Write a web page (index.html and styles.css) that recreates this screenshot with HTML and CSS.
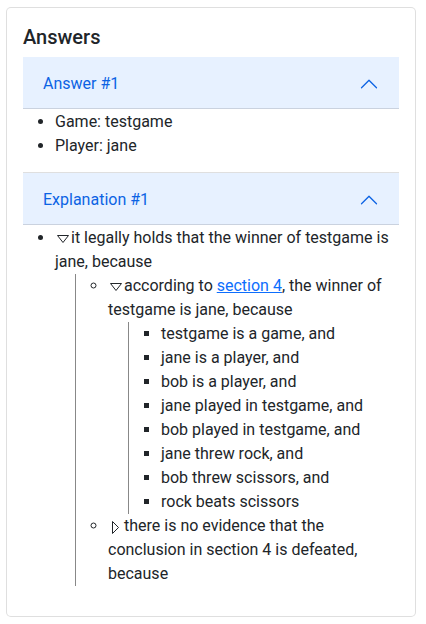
FILE: index.html
```html
<!DOCTYPE html>
<html lang="en">
<head>
<meta charset="utf-8">
<title>Answers</title>
<link rel="stylesheet" href="styles.css">
</head>
<body>
<div class="card">
  <div class="card-body">
    <h5 class="card-title">Answers</h5>
    <div class="accordion">
      <div class="accordion-item">
        <h2 class="accordion-header">
          <button class="accordion-button" type="button">
            <span>Answer #1</span>
            <svg class="chev" viewBox="0 0 16 16" width="20" height="20"><path transform="rotate(180 8 8)" fill="#0c63e4" fill-rule="evenodd" d="M1.646 4.646a.5.5 0 0 1 .708 0L8 10.293l5.646-5.647a.5.5 0 0 1 .708.708l-6 6a.5.5 0 0 1-.708 0l-6-6a.5.5 0 0 1 0-.708z"/></svg>
          </button>
        </h2>
        <div class="accordion-body">
          <ul class="list">
            <li>Game: testgame</li>
            <li>Player: jane</li>
          </ul>
        </div>
      </div>
      <div class="accordion-item">
        <h2 class="accordion-header">
          <button class="accordion-button" type="button">
            <span>Explanation #1</span>
            <svg class="chev" viewBox="0 0 16 16" width="20" height="20"><path transform="rotate(180 8 8)" fill="#0c63e4" fill-rule="evenodd" d="M1.646 4.646a.5.5 0 0 1 .708 0L8 10.293l5.646-5.647a.5.5 0 0 1 .708.708l-6 6a.5.5 0 0 1-.708 0l-6-6a.5.5 0 0 1 0-.708z"/></svg>
          </button>
        </h2>
        <div class="accordion-body">
          <ul class="list">
            <li><span class="tri-down"><svg width="12" height="8" viewBox="0 0 12 8"><polygon points="0.5,0.5 11.5,0.5 6,7.5" fill="none" stroke="#212529" stroke-width="1"/></svg></span>it legally holds that the winner of testgame is jane, because
              <ul class="sub">
                <li><span class="tri-down"><svg width="12" height="8" viewBox="0 0 12 8"><polygon points="0.5,0.5 11.5,0.5 6,7.5" fill="none" stroke="#212529" stroke-width="1"/></svg></span>according to <a href="#s4" class="link">section 4</a>, the winner of testgame is jane, because
                  <ul class="sub">
                    <li>testgame is a game, and</li>
                    <li>jane is a player, and</li>
                    <li>bob is a player, and</li>
                    <li>jane played in testgame, and</li>
                    <li>bob played in testgame, and</li>
                    <li>jane threw rock, and</li>
                    <li>bob threw scissors, and</li>
                    <li>rock beats scissors</li>
                  </ul>
                </li>
                <li><span class="tri-right"><svg width="7" height="13" viewBox="0 0 7 13"><polygon points="0.5,0.5 6.5,6.5 0.5,12.5" fill="none" stroke="#212529" stroke-width="1"/></svg></span>there is no evidence that the conclusion in section 4 is defeated, because</li>
              </ul>
            </li>
          </ul>
        </div>
      </div>
    </div>
  </div>
</div>
</body>
</html>
```

FILE: styles.css
```css
* {
  box-sizing: border-box;
}

body {
  margin: 7px 10px 7px 6px;
  font-family: Roboto, "Noto Sans", "Liberation Sans", sans-serif;
  font-size: 16px;
  line-height: 1.5;
  color: #212529;
  background: #fff;
}

.card {
  border: 1px solid rgba(0, 0, 0, 0.125);
  border-radius: 5px;
  background: #fff;
}

.card-body {
  padding: 17px 16px 16px;
}

.card-title {
  margin: 0 0 8px;
  font-size: 20px;
  font-weight: 500;
  line-height: 1.2;
}

.accordion-item {
  border-bottom: 1px solid rgba(0, 0, 0, 0.125);
}

.accordion-item:last-child {
  border-bottom: 0;
}

.accordion-header {
  margin: 0;
  font-size: 16px;
  font-weight: 400;
}

.accordion-button {
  display: flex;
  align-items: center;
  width: 100%;
  padding: 15px 20px 13px;
  border: 0;
  background: #e7f1ff;
  color: #0c63e4;
  font: inherit;
  font-size: 16px;
  line-height: 24px;
  text-align: left;
  box-shadow: inset 0 -1px 0 rgba(0, 0, 0, 0.125);
  cursor: pointer;
}

.chev {
  flex-shrink: 0;
  margin-left: auto;
}

.accordion-body {
  padding: 1px 0 0;
}

.list {
  margin: 0 0 14px;
  padding-left: 32px;
}

.sub {
  margin: 0 0 0 20px;
  padding-left: 32px;
  border-left: 1px solid #888;
}

.list li {
  line-height: 24px;
}

.sub > li {
  list-style-type: circle;
}

.sub .sub > li {
  list-style-type: square;
}

.tri-down svg {
  display: inline-block;
  margin: 0 2px 0 2px;
  vertical-align: 0px;
}

.tri-right svg {
  display: inline-block;
  margin: 0 5px 0 4px;
  vertical-align: -3px;
}

.link {
  color: #0d6efd;
  text-decoration: underline;
}
```
